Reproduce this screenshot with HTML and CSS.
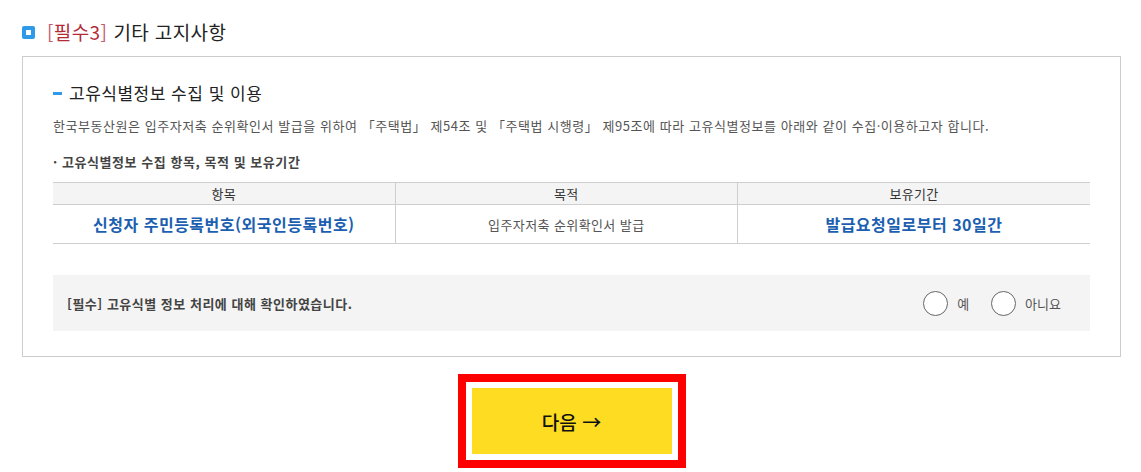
FILE: index.html
```html
<!DOCTYPE html>
<html lang="ko">
<head>
<meta charset="utf-8">
<link rel="stylesheet" href="styles.css">
</head>
<body>
<div class="page">
  <h2 class="title"><span class="title-icon"></span><span class="req"><span class="br">[</span>필수3<span class="br">]</span></span> 기타 고지사항</h2>
  <section class="box">
    <h3 class="sub"><span class="dash"></span>고유식별정보 수집 및 이용</h3>
    <p class="desc">한국부동산원은 입주자저축 순위확인서 발급을 위하여 「주택법」 제54조 및 「주택법 시행령」 제95조에 따라 고유식별정보를 아래와 같이 수집·이용하고자 합니다.</p>
    <p class="bullet">· 고유식별정보 수집 항목, 목적 및 보유기간</p>
    <table class="tbl">
      <colgroup><col class="c1"><col class="c2"><col class="c3"></colgroup>
      <thead>
        <tr><th>항목</th><th>목적</th><th>보유기간</th></tr>
      </thead>
      <tbody>
        <tr><td class="em">신청자 주민등록번호(외국인등록번호)</td><td>입주자저축 순위확인서 발급</td><td class="em">발급요청일로부터 30일간</td></tr>
      </tbody>
    </table>
    <div class="agree">
      <span class="agree-text">[필수] 고유식별 정보 처리에 대해 확인하였습니다.</span>
      <div class="radios">
        <label class="radio"><span class="circle"></span>예</label>
        <label class="radio"><span class="circle"></span>아니요</label>
      </div>
    </div>
  </section>
  <div class="actions">
    <button class="next">다음 →</button>
  </div>
</div>
</body>
</html>
```

FILE: styles.css
```css
* { box-sizing: border-box; }
html, body { margin: 0; padding: 0; background: #fff; }
body {
  font-family: "Noto Sans CJK KR", "Noto Sans", sans-serif;
  color: #222;
}
.page { padding: 20px 20px 30px 22px; min-height: 472px; }
.title {
  margin: 0;
  display: flex;
  align-items: center;
  font-size: 19px;
  letter-spacing: 0.4px;
  line-height: 24px;
  font-weight: 400;
  color: #222;
  height: 24px;
}
.title-icon {
  width: 13px;
  height: 13px;
  border-radius: 2px;
  background: #2f9be8;
  margin-right: 12px;
  position: relative;
  flex: none;
}
.title-icon::after {
  content: "";
  position: absolute;
  left: 4px; top: 4px;
  width: 5px; height: 5px;
  background: #fff;
}
.req { color: #b42a36; margin-right: 6px; }
.req .br { color: #c65a6e; }

.box {
  margin-top: 12px;
  border: 1px solid #cccccc;
  padding: 24px 30px 25px 30px;
}
.sub {
  margin: 0;
  display: flex;
  align-items: center;
  font-size: 17px;
  letter-spacing: 0.5px;
  line-height: 24px;
  font-weight: 400;
  color: #222;
}
.dash {
  width: 9px;
  height: 3px;
  background: #2f9be8;
  margin-right: 7px;
}
.desc {
  margin: 11px 0 0;
  font-size: 13px;
  letter-spacing: 0.55px;
  line-height: 20px;
  color: #555;
}
.bullet {
  margin: 16px 0 0;
  font-size: 13px;
  letter-spacing: 0.55px;
  line-height: 20px;
  font-weight: 700;
  color: #444;
}
.tbl {
  margin-top: 10px;
  width: 100%;
  border-collapse: collapse;
  table-layout: fixed;
  border-top: 1px solid #cfcfcf;
  border-bottom: 1px solid #cfcfcf;
}
.tbl .c1, .tbl .c2 { width: 33%; }
.tbl th {
  background: #f4f4f4;
  font-weight: 400;
  font-size: 13px;
  letter-spacing: 0.3px;
  color: #333;
  height: 22px;
  padding: 0;
  border-bottom: 1px solid #cfcfcf;
}
.tbl td {
  font-size: 13px;
  letter-spacing: 0.4px;
  color: #555;
  height: 39px;
  padding: 0;
  text-align: center;
}
.tbl th + th, .tbl td + td { border-left: 1px solid #cfcfcf; }
.tbl td.em {
  font-size: 16px;
  letter-spacing: 0.5px;
  font-weight: 700;
  color: #1c5fb0;
}
.agree {
  margin-top: 31px;
  background: #f4f4f4;
  height: 56px;
  display: flex;
  align-items: center;
  justify-content: space-between;
  padding: 0 29px 0 14px;
}
.agree-text {
  font-size: 13px;
  letter-spacing: 0.5px;
  font-weight: 700;
  color: #444;
}
.radios { display: flex; align-items: center; gap: 22px; }
.radio {
  display: flex;
  align-items: center;
  gap: 9px;
  font-size: 13px;
  color: #555;
}
.circle {
  width: 25px;
  height: 25px;
  border: 1px solid #666;
  border-radius: 50%;
  background: #fff;
}
.actions {
  display: flex;
  justify-content: center;
  padding-top: 31px;
}
.next {
  width: 200px;
  height: 66px;
  background: #fddc22;
  border: none;
  font-family: inherit;
  font-size: 19px;
  font-weight: 500;
  color: #111;
  outline: 8px solid #ff0000;
  outline-offset: 6px;
}
```
